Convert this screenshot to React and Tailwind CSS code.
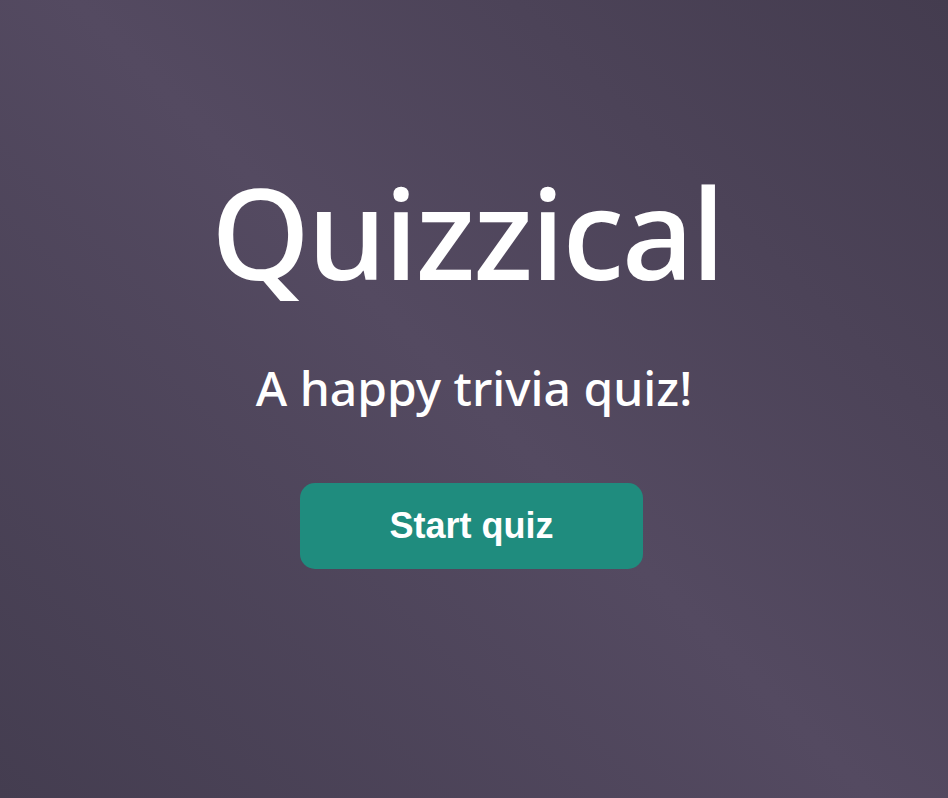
import React from 'react';

const App = () => {
    const handleStart = () => {
        // quiz screen would load here
    };

    return (
        <div className="min-h-screen w-full bg-[linear-gradient(225deg,#443c4f_0%,#544a61_50%,#443d50_100%)] flex flex-col items-center pt-[168px] font-['Noto_Sans',sans-serif] text-white">
            <h1 className="text-[126px] leading-none font-medium tracking-[-2.5px] mr-[14px]">Quizzical</h1>
            <p className="mt-[70px] text-[48px] leading-none font-medium">A happy trivia quiz!</p>
            <button
                onClick={handleStart}
                className="mt-[71px] w-[343px] h-[86px] rounded-[15px] bg-[#1f8c7e] text-white text-[36px] font-bold font-['Liberation_Sans',Arial,sans-serif] mr-[5px]"
            >
                Start quiz
            </button>
        </div>
    );
};

export default App;
